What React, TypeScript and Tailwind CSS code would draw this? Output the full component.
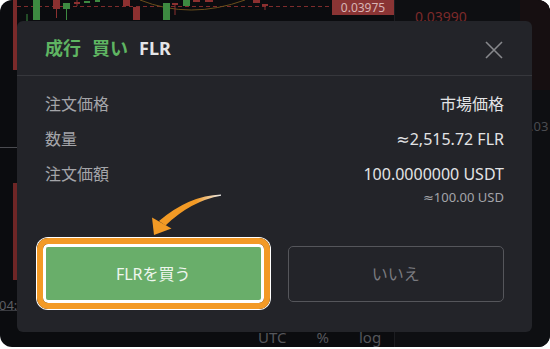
import React from "react"

const candles = [
  { x: 13, y: 0, w: 4, h: 21, c: "#8c3030" },
  { x: 33, y: 0, w: 7, h: 20, c: "#3d8a41" },
  { x: 53, y: 0, w: 7, h: 9, c: "#8c3030" },
  { x: 63, y: 3, w: 7, h: 6, c: "#3d8a41" },
  { x: 74, y: 2, w: 6, h: 2, c: "#8c3030" },
  { x: 84, y: 1, w: 6, h: 2, c: "#3d8a41" },
  { x: 95, y: 0, w: 5, h: 2, c: "#3d8a41" },
  { x: 123, y: 0, w: 7, h: 6, c: "#8c3030" },
  { x: 133, y: 7, w: 7, h: 13, c: "#8c3030" },
  { x: 163, y: 3, w: 7, h: 17, c: "#3d8a41" },
  { x: 172, y: 3, w: 6, h: 2, c: "#8c3030" },
  { x: 183, y: 0, w: 7, h: 6, c: "#3d8a41" },
  { x: 193, y: 0, w: 7, h: 2, c: "#8c3030" },
  { x: 205, y: 0, w: 8, h: 2, c: "#8c3030" },
  { x: 253, y: 0, w: 7, h: 3, c: "#8c3030" },
  { x: 262, y: 4, w: 6, h: 2, c: "#8c3030" },
]

const wicks = [
  { x: 27, y1: 14, y2: 21, c: "#3d8a41" },
  { x: 56.5, y1: 9, y2: 18, c: "#8c3030" },
  { x: 66.5, y1: 9, y2: 20, c: "#3d8a41" },
  { x: 77, y1: 0, y2: 6, c: "#8c3030" },
  { x: 175, y1: 4, y2: 15, c: "#8c3030" },
  { x: 265, y1: 5, y2: 10, c: "#8c3030" },
]

const rows = [
  { label: "注文価格", value: "市場価格" },
  { label: "数量", value: "≈2,515.72 FLR" },
  { label: "注文価額", value: "100.0000000 USDT" },
]

function ChartBackdrop() {
  return (
    <>
      {/* candle strip above the dialog */}
      <svg className="absolute left-0 top-0" width="394" height="22">
        <line x1="17" y1="6.5" x2="332" y2="6.5" stroke="#7e2c2c" strokeDasharray="4 3" />
        <path d="M140 0 Q190 20 245 0" fill="none" stroke="#6b4f1c" strokeWidth="1" />
        {wicks.map((w, i) => (
          <line key={i} x1={w.x} y1={w.y1} x2={w.x} y2={w.y2} stroke={w.c} strokeWidth="1" />
        ))}
        {candles.map((c, i) => (
          <rect key={i} x={c.x} y={c.y} width={c.w} height={c.h} fill={c.c} />
        ))}
      </svg>

      {/* left edge of chart */}
      <div className="absolute left-[13px] top-0 w-[4px] h-[70px] bg-[#7a2a2a]" />
      <div className="absolute left-0 top-[147px] w-[17px] h-px bg-[#4a4b50]" />
      <div className="absolute left-[13px] top-[183px] w-[4px] h-[97px] bg-[#6e2626]" />
      <div className="absolute left-0 top-[310px] w-[17px] h-px bg-[#3a3b40]" />
      <div className="absolute left-[-1px] top-[296px] text-[13px] leading-[18px] text-[#5d5e63]">04:</div>

      {/* price tag + order book side */}
      <div className="absolute left-[394px] top-0 w-[156px] h-[347px] bg-[#0e0f12] border-l border-[#1c1d21]" />
      <div className="absolute left-[520px] top-0 w-[30px] h-[90px] bg-[#160f11]" />
      <div className="absolute left-[332px] top-0 w-[62px] h-[15px] bg-[#8a3434] flex items-center justify-center text-[12px] leading-[14px] text-[#d8b4b4]">
        0.03975
      </div>
      <div className="absolute left-[415px] top-[9px] text-[14px] leading-[16px] text-[#7c2a2a]">0.03990</div>
      <div className="absolute left-[530px] top-[118px] text-[13px] leading-[16px] text-[#4a4b50]">.03</div>

      {/* bottom axis */}
      <div className="absolute left-[258px] top-[327px] flex gap-[30px] text-[15px] leading-[20px] text-[#55565b]">
        <span>UTC</span>
        <span>%</span>
        <span>log</span>
      </div>
    </>
  )
}

function Arrow() {
  return (
    <svg className="absolute left-[145px] top-[190px]" width="85" height="50" viewBox="0 0 85 50">
      <defs>
        <linearGradient id="tail" x1="0" y1="0" x2="1" y2="0">
          <stop offset="0" stopColor="#f29a25" />
          <stop offset="0.6" stopColor="#f29a25" />
          <stop offset="1" stopColor="#ffffff" stopOpacity="0.9" />
        </linearGradient>
      </defs>
      <path d="M76 4.5 Q44 5.5 14 31 L20.5 35.5 Q46 11 76 5.8 Z" fill="url(#tail)" />
      <path d="M9 45 L7 27.5 L26.5 38.5 Z" fill="#f29a25" />
    </svg>
  )
}

export default function App() {
  return (
    <div className="w-[550px] h-[349px] bg-white overflow-hidden font-[family-name:'Noto_Sans','DejaVu_Sans','Noto_Sans_CJK_JP',sans-serif]">
      <div className="relative w-[550px] h-[347px] rounded-[12px] bg-[#0b0c0f] overflow-hidden">
        <ChartBackdrop />

        {/* confirm dialog */}
        <div className="absolute left-[17px] top-[21px] w-[515px] h-[311px] rounded-[6px] bg-[#232429] flex flex-col">
          <div className="h-[55px] flex items-center justify-between pl-7 pr-[29px] border-b border-[#36373c]">
            <div className="flex items-center gap-[11px] text-[18px] font-bold leading-6">
              <span className="text-[#5fb562]">成行</span>
              <span className="text-[#5fb562]">買い</span>
              <span className="text-[#e4e5e7]">FLR</span>
            </div>
            <svg width="18" height="18" viewBox="0 0 18 18" className="mt-[3px]">
              <path d="M1 1 L17 17 M17 1 L1 17" stroke="#87888c" strokeWidth="1.6" />
            </svg>
          </div>

          <div className="px-7 pt-[10px]">
            {rows.map((r) => (
              <div key={r.label} className="h-[35px] flex items-center justify-between text-[16px]">
                <span className="text-[#a4a5a9]">{r.label}</span>
                <span className="text-[#e2e3e5]">{r.value}</span>
              </div>
            ))}
            <div className="text-right text-[13px] leading-[12px] text-[#a4a5a9]">≈100.00 USD</div>

            <div className="grid grid-cols-2 gap-[26px] mt-[43px]">
              <div className="relative">
                <button className="w-full h-[56px] rounded-[5px] bg-[#69ae6a] text-[16px] text-[#eef6ee]">
                  FLRを買う
                </button>
                <div className="absolute -left-[8px] -right-[8px] -top-[8px] -bottom-[7px] rounded-[11px] border-[6px] border-[#f39a26] shadow-[0_0_0_1px_#ffffff,inset_0_0_0_3px_#ffffff]" />
              </div>
              <button className="h-[56px] rounded-[5px] border-[1.5px] border-[#55565b] text-[16px] text-[#7a7b80]">
                いいえ
              </button>
            </div>
          </div>
        </div>

        <Arrow />
      </div>
    </div>
  )
}
